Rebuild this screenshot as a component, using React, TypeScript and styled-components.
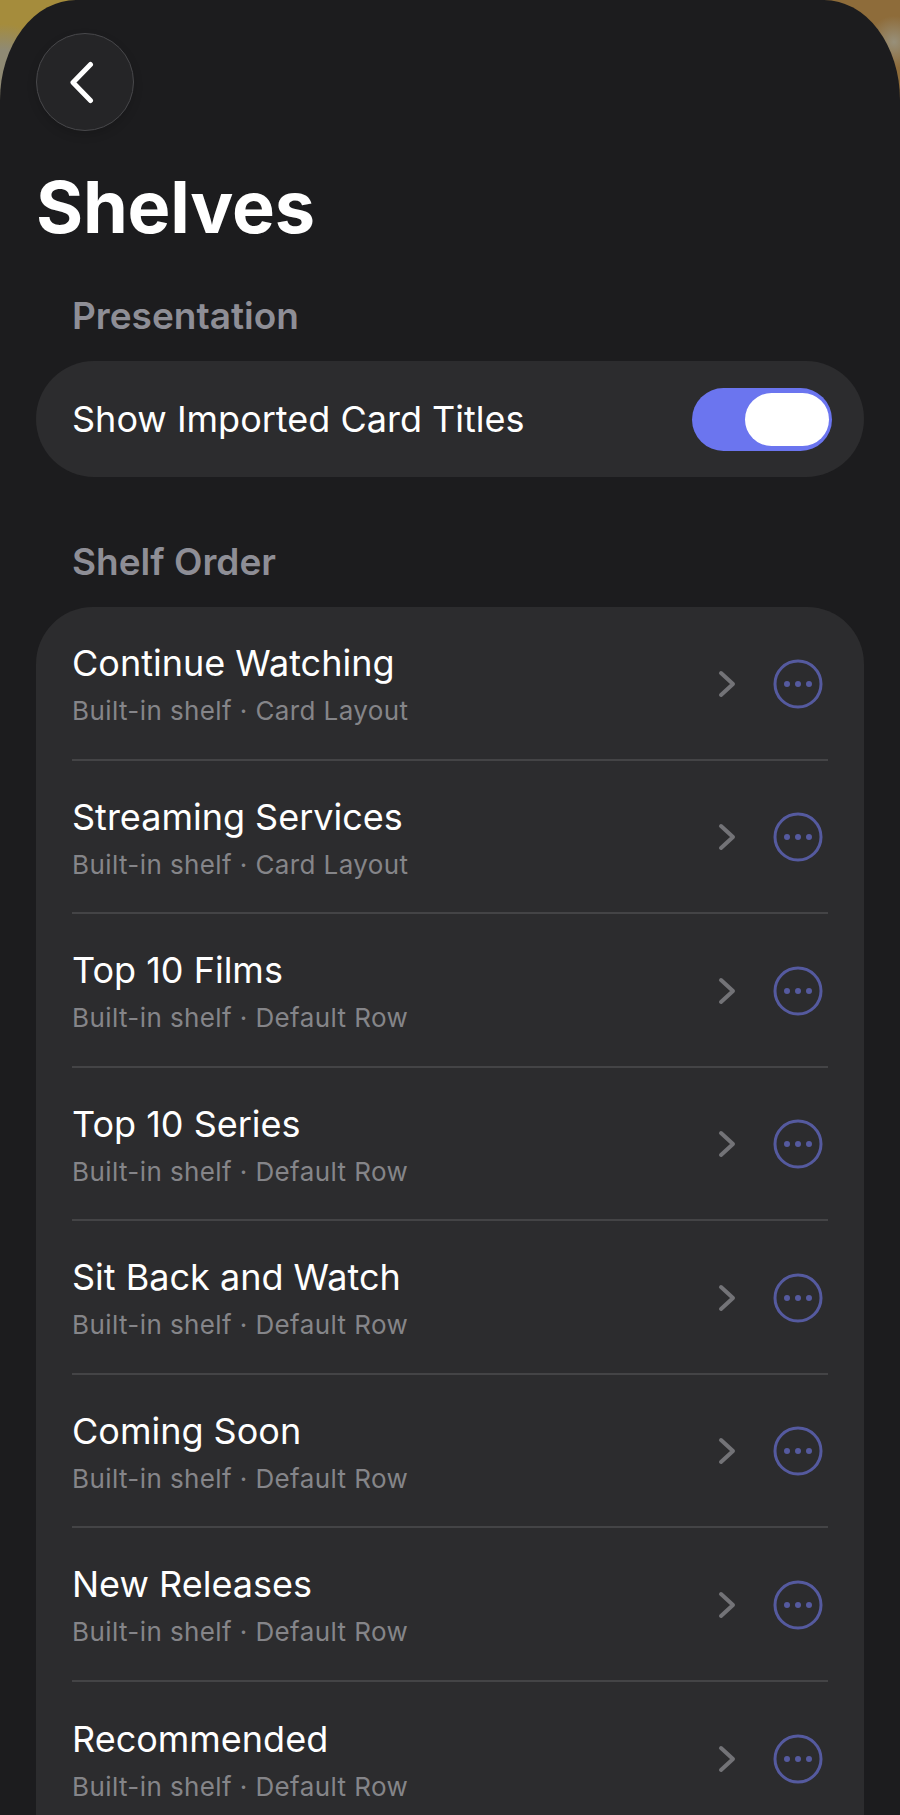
import { createGlobalStyle, styled } from "styled-components";

const GlobalStyle = createGlobalStyle`
  html, body {
    margin: 0;
    padding: 0;
    background: #1c1c1e;
  }
`;

const Backdrop = styled.div`
  width: 900px;
  height: 1815px;
  overflow: hidden;
  background:
    radial-gradient(circle at 4px 72px, #8f8a74 0, #8f8a74 22px, rgba(143, 138, 116, 0) 48px),
    radial-gradient(circle at 894px 42px, #98907a 0, rgba(152, 144, 122, 0) 26px),
    linear-gradient(90deg, #a58c3c 0, #a58c3c 90px, #8e6c3a 760px, #8e6c3a 100%);
`;

const Sheet = styled.div`
  height: 100%;
  box-sizing: border-box;
  padding: 33px 36px 0;
  background: #1c1c1e;
  border-radius: 76px 76px 0 0 / 100px 100px 0 0;
  font-family: Inter, "Liberation Sans", sans-serif;
`;

const BackButton = styled.div`
  width: 98px;
  height: 98px;
  box-sizing: border-box;
  display: flex;
  align-items: center;
  justify-content: center;
  border-radius: 50%;
  background: #252527;
  border: 1.5px solid #48484b;
  box-shadow: 0 4px 10px rgba(0, 0, 0, 0.15);
  color: #fff;
`;

const Title = styled.h1`
  margin: 32px 0 0;
  color: #fff;
  font-size: 72px;
  font-weight: 700;
  line-height: 87px;
  letter-spacing: -0.2px;
`;

const SectionLabel = styled.h2<{ $top: number }>`
  margin: ${(p) => p.$top}px 0 0 36px;
  color: #8e8e96;
  font-size: 37px;
  font-weight: 600;
  line-height: 44px;
`;

const ToggleCard = styled.div`
  margin-top: 23px;
  height: 116px;
  box-sizing: border-box;
  padding: 0 32px 0 36px;
  display: flex;
  align-items: center;
  justify-content: space-between;
  background: #2c2c2e;
  border-radius: 58px;
`;

const ToggleLabel = styled.span`
  color: #fff;
  font-size: 36px;
  line-height: 44px;
`;

const Toggle = styled.div`
  width: 140px;
  height: 63px;
  box-sizing: border-box;
  padding: 5px 3px 5px 0;
  display: flex;
  justify-content: flex-end;
  background: #6b75ef;
  border-radius: 32px;
`;

const Knob = styled.div`
  width: 84px;
  height: 53px;
  background: #fff;
  border-radius: 27px;
`;

const ShelfCard = styled.div`
  margin-top: 23px;
  background: #2c2c2e;
  border-radius: 57px 57px 0 0;
`;

const Row = styled.div`
  height: 153.5px;
  margin: 0 36px;
  box-sizing: border-box;
  display: flex;
  align-items: center;
  border-bottom: 2px solid #444446;

  &:last-child {
    border-bottom: 0;
  }
`;

const RowText = styled.div`
  flex: 1;
  margin-top: 3px;
`;

const RowTitle = styled.div`
  color: #fff;
  font-size: 36px;
  line-height: 44px;
`;

const RowSubtitle = styled.div`
  margin-top: 10px;
  color: #858589;
  font-size: 26px;
  line-height: 32px;
  letter-spacing: 0.4px;
`;

const RowIcons = styled.div`
  display: flex;
  align-items: center;
  gap: 37px;
  margin: 2px 5px 0 0;
`;

const BackIcon = () => (
  <svg width="30" height="44" viewBox="0 0 30 44" fill="none">
    <path
      d="M20.5 4.5 3 22.5 20.5 40.5"
      stroke="currentColor"
      strokeWidth="5"
      strokeLinecap="round"
      strokeLinejoin="round"
    />
  </svg>
);

const ChevronIcon = () => (
  <svg width="18" height="28" viewBox="0 0 18 28" fill="none">
    <path
      d="M3 3l12 11L3 25"
      stroke="#737377"
      strokeWidth="4"
      strokeLinecap="round"
      strokeLinejoin="round"
    />
  </svg>
);

const MoreIcon = () => (
  <svg width="50" height="50" viewBox="0 0 50 50" fill="none">
    <circle cx="25" cy="25" r="23" stroke="#555a9f" strokeWidth="3" />
    <circle cx="14" cy="25" r="3" fill="#555a9f" />
    <circle cx="25" cy="25" r="3" fill="#555a9f" />
    <circle cx="36" cy="25" r="3" fill="#555a9f" />
  </svg>
);

const shelves = [
  { title: "Continue Watching", layout: "Card Layout" },
  { title: "Streaming Services", layout: "Card Layout" },
  { title: "Top 10 Films", layout: "Default Row" },
  { title: "Top 10 Series", layout: "Default Row" },
  { title: "Sit Back and Watch", layout: "Default Row" },
  { title: "Coming Soon", layout: "Default Row" },
  { title: "New Releases", layout: "Default Row" },
  { title: "Recommended", layout: "Default Row" },
];

export default function App() {
  return (
    <Backdrop>
      <GlobalStyle />
      <Sheet>
        <BackButton>
          <BackIcon />
        </BackButton>
        <Title>Shelves</Title>
        <SectionLabel $top={44}>Presentation</SectionLabel>
        <ToggleCard>
          <ToggleLabel>Show Imported Card Titles</ToggleLabel>
          <Toggle>
            <Knob />
          </Toggle>
        </ToggleCard>
        <SectionLabel $top={63}>Shelf Order</SectionLabel>
        <ShelfCard>
          {shelves.map((shelf) => (
            <Row key={shelf.title}>
              <RowText>
                <RowTitle>{shelf.title}</RowTitle>
                <RowSubtitle>Built-in shelf · {shelf.layout}</RowSubtitle>
              </RowText>
              <RowIcons>
                <ChevronIcon />
                <MoreIcon />
              </RowIcons>
            </Row>
          ))}
        </ShelfCard>
      </Sheet>
    </Backdrop>
  );
}
